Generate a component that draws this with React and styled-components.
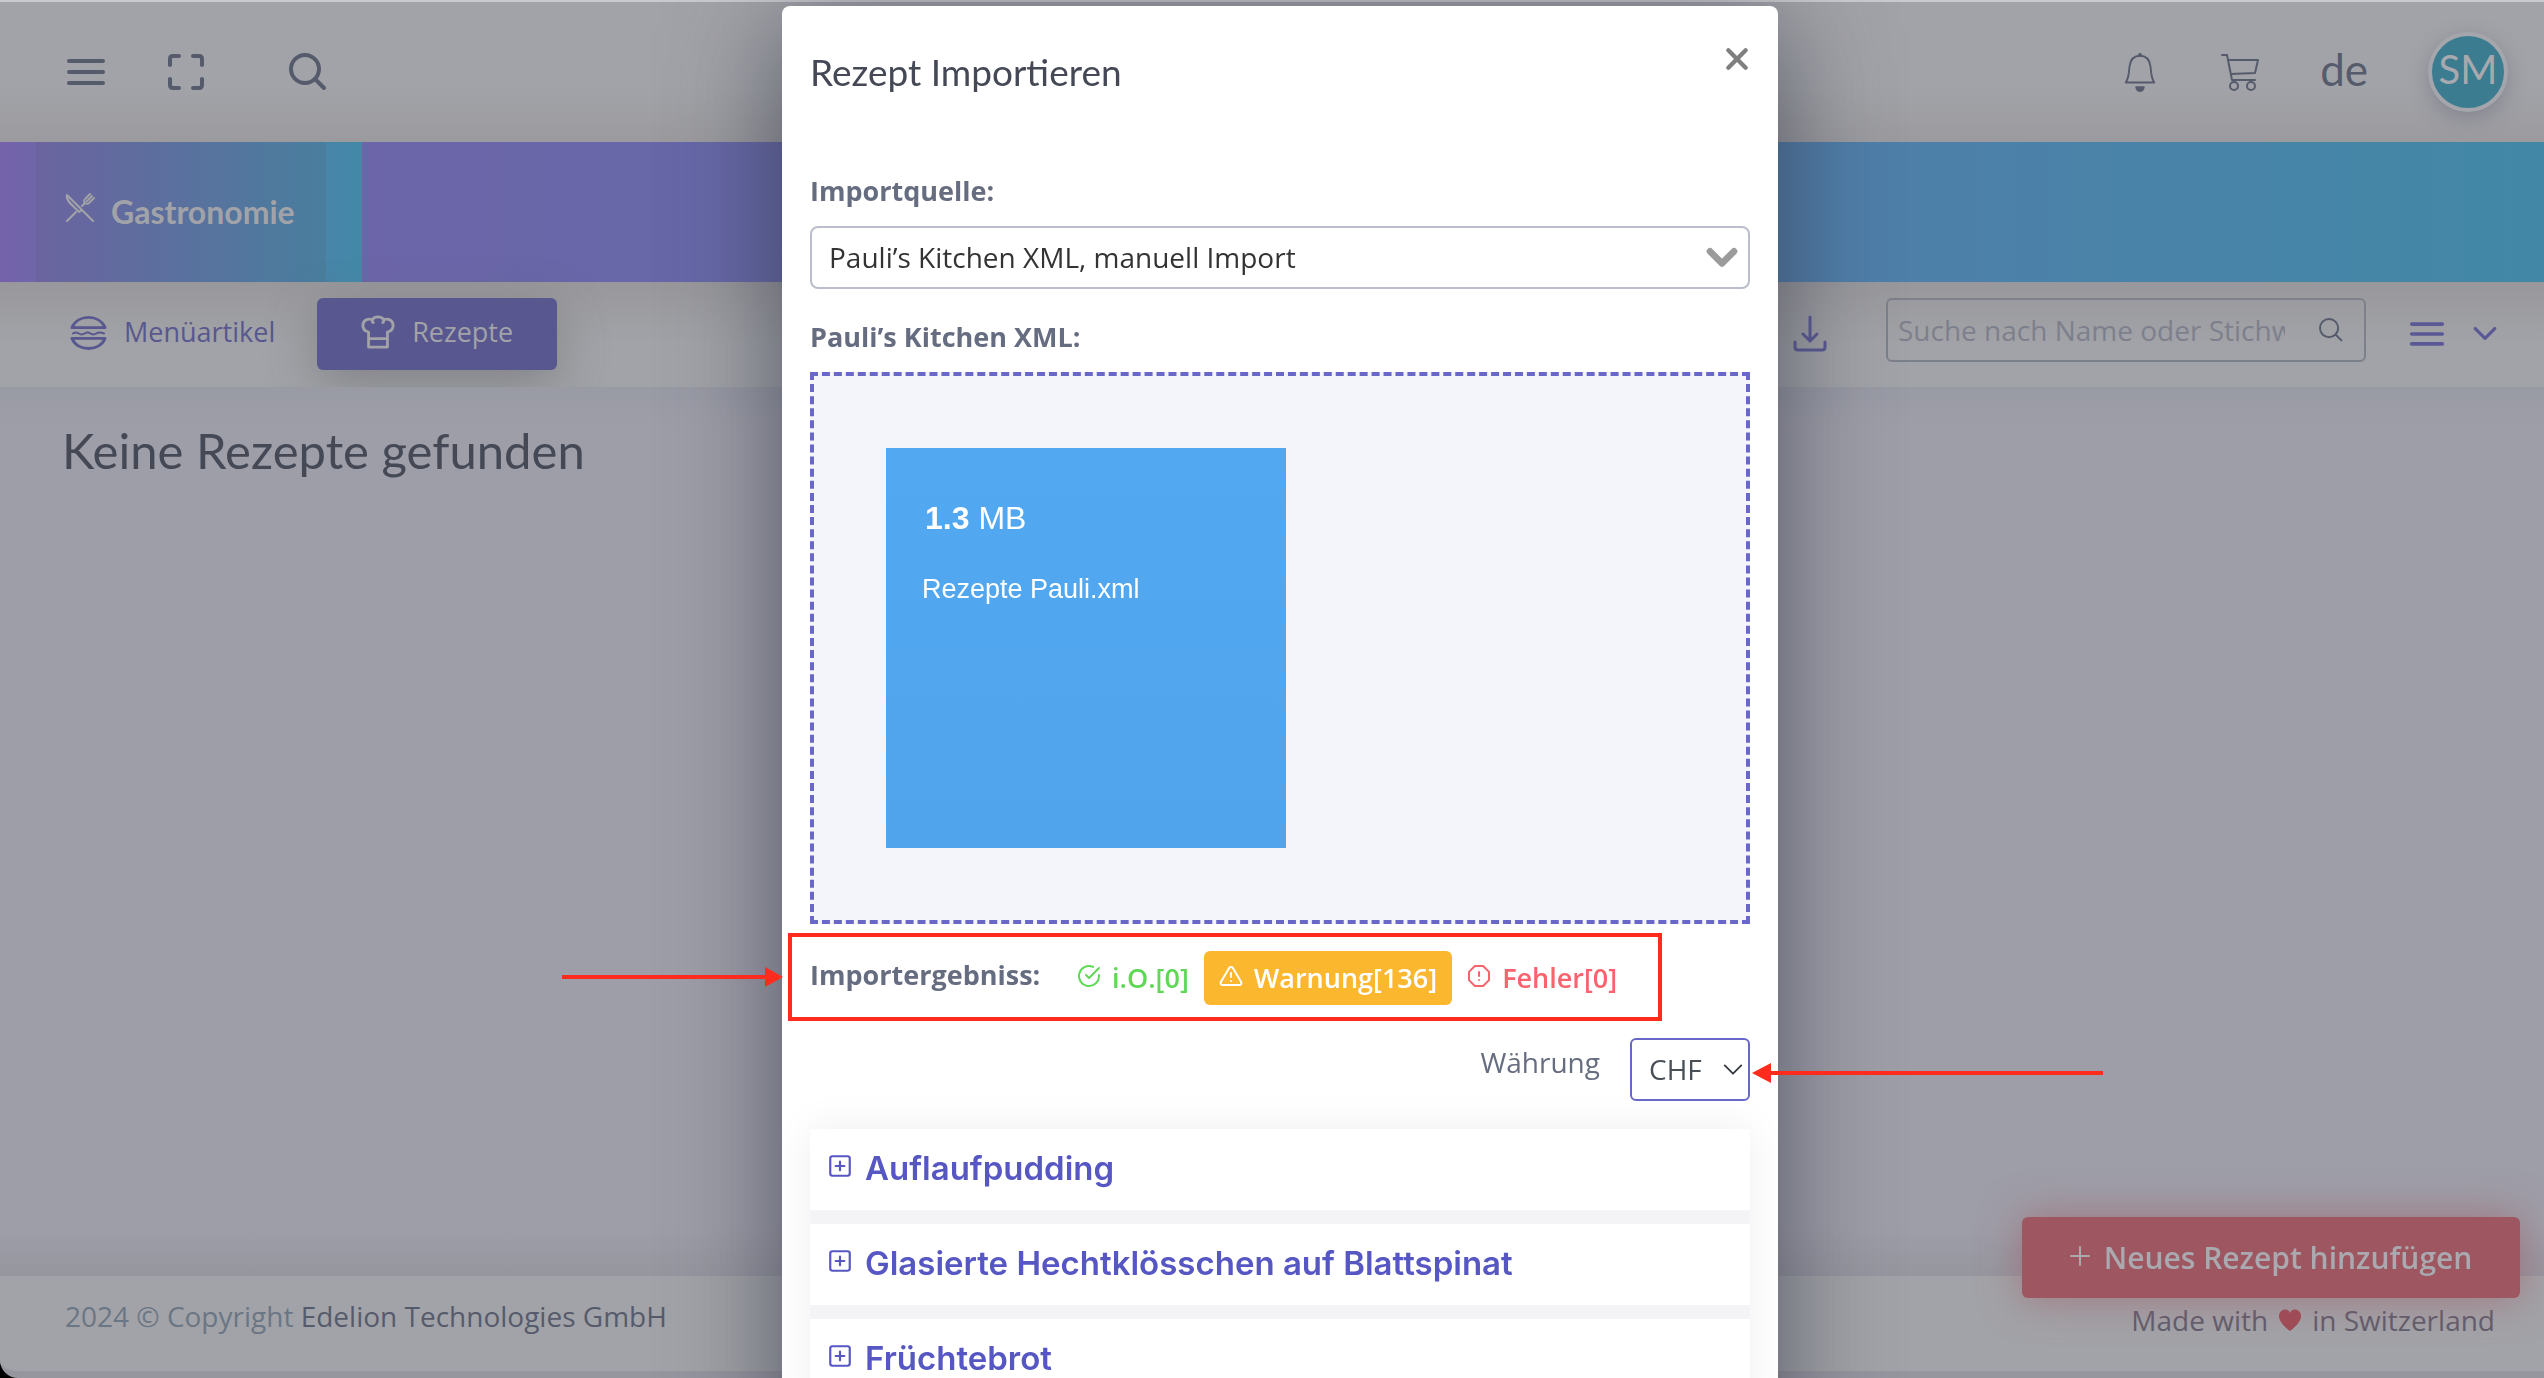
import React from 'react';
import styled, { createGlobalStyle, css } from 'styled-components';
import { FiCheckCircle, FiAlertTriangle, FiAlertOctagon, FiPlusSquare } from 'react-icons/fi';

const GlobalStyle = createGlobalStyle`
  *,
  *::before,
  *::after {
    box-sizing: border-box;
  }

  body {
    margin: 0;
    background: #000;
    color: #565b6c;
    font-family: 'Open Sans', 'Noto Sans', sans-serif;
    font-size: 28px;
    line-height: 40px;
  }

  button,
  input,
  select {
    font: inherit;
    color: inherit;
  }

  button {
    padding: 0;
    border: 0;
    background: none;
  }
`;

const headingFont = css`
  font-family: Lato, 'Open Sans', sans-serif;
`;

const Page = styled.div`
  display: flex;
  flex-direction: column;
  height: 100vh;
  overflow: hidden;
  border-top: 2px solid #c9cacd;
  border-bottom: 7px solid #96969f;
  border-bottom-left-radius: 18px;
  background: #9e9ea8;
`;

const Icon = styled.svg`
  flex: none;
  width: ${({ $size }) => $size}px;
  height: ${({ $size }) => $size}px;
  fill: none;
  stroke: currentColor;
  stroke-width: ${({ $stroke }) => $stroke || 2};
  stroke-linecap: round;
  stroke-linejoin: round;
`;

/* Header */

const HeaderBar = styled.header`
  display: flex;
  flex: none;
  align-items: center;
  justify-content: space-between;
  height: 140px;
  padding: 0 36px 0 66px;
  background: linear-gradient(#a2a3a8 60%, #9b9b9f);
`;

const HeaderLeft = styled.div`
  display: flex;
  align-items: center;
`;

const HeaderRight = styled.div`
  display: flex;
  align-items: center;
  gap: 60px;
`;

const IconButton = styled.button`
  display: flex;
  margin-right: ${({ $space }) => $space || 0}px;
`;

const Language = styled.button`
  ${headingFont}
  padding-bottom: 6px;
  font-size: 44px;
`;

const Avatar = styled.button`
  ${headingFont}
  width: 80px;
  height: 80px;
  padding-bottom: 6px;
  border: 4px solid #a5a6ac;
  border-radius: 50%;
  background: #3c7c90;
  box-shadow: 0 6px 20px rgba(80, 80, 110, 0.35);
  color: #a8a9ae;
  font-size: 40px;
`;

/* Category banner */

const Banner = styled.nav`
  display: flex;
  flex: none;
  height: 140px;
  background: linear-gradient(90deg, #7163aa, #6668a8 30%, #4d80a9 76%, #4288a6);
`;

const Category = styled.div`
  padding: 0 36px;
  background: linear-gradient(90deg, #7562aa, #4389a8);
`;

const CategoryLink = styled.a`
  ${headingFont}
  display: flex;
  align-items: center;
  gap: 16px;
  width: 290px;
  height: 140px;
  padding-left: 29px;
  background: rgba(80, 90, 100, 0.15);
  color: #a2a3a8;
  font-size: 32px;
  font-weight: 700;
  text-decoration: none;

  svg {
    margin-bottom: 8px;
  }
`;

/* Toolbar */

const Toolbar = styled.div`
  display: flex;
  flex: none;
  align-items: flex-start;
  justify-content: space-between;
  height: 105px;
  padding: 16px 46px 0 70px;
  background: linear-gradient(#98989c, #a2a3a8 60%);
`;

const Tabs = styled.div`
  display: flex;
  gap: 42px;
`;

const Tab = styled.button`
  display: flex;
  align-items: center;
  gap: 17px;
  height: 72px;
  padding-bottom: 4px;
  color: #58578f;
  font-size: 27px;

  ${({ $active }) =>
    $active &&
    css`
      padding: 0 44px 4px;
      border-radius: 6px;
      background: #58578f;
      box-shadow: 0 14px 50px rgba(90, 90, 90, 0.45);
      color: #a2a3a8;
    `}
`;

const Tools = styled.div`
  display: flex;
  align-items: center;
  height: 72px;
  color: #5a5996;
`;

const SearchBox = styled.label`
  display: flex;
  align-items: center;
  align-self: flex-start;
  width: 480px;
  height: 64px;
  margin: 0 43px 0 57px;
  padding: 0 20px 0 10px;
  border: 2px solid #7c808b;
  border-radius: 6px;
  color: #565b6c;
`;

const SearchInput = styled.input`
  width: 387px;
  margin-right: auto;
  padding: 0;
  border: 0;
  outline: 0;
  background: none;

  &::placeholder {
    color: #7d808c;
    opacity: 1;
  }
`;

/* Content and footer */

const Content = styled.main`
  flex: 1;
  padding: 37px 62px;
  background: linear-gradient(#989aa4, #9e9ea8 40px, #9e9ea8 840px, #96969f);
`;

const EmptyTitle = styled.h1`
  ${headingFont}
  margin: 0;
  color: #454955;
  font-size: 49px;
  font-weight: 400;
  line-height: 52px;
`;

const FooterBar = styled.footer`
  display: flex;
  flex: none;
  align-items: flex-start;
  justify-content: space-between;
  height: 95px;
  padding: 20px 49px 0 65px;
  background: #a2a3a8;
`;

const FooterText = styled.p`
  margin: 0;
  color: #6b7684;

  a {
    color: #565b6c;
    text-decoration: none;
  }
`;

const MadeWith = styled.p`
  display: flex;
  align-items: center;
  gap: 10px;
  margin: 4px 0 0;
  color: #615d6c;
`;

const AddButton = styled.button`
  position: fixed;
  right: 24px;
  bottom: 80px;
  display: flex;
  align-items: center;
  justify-content: center;
  gap: 14px;
  width: 498px;
  height: 81px;
  border-radius: 6px;
  background: #9e5661;
  box-shadow: 0 0 40px rgba(158, 86, 97, 0.6);
  color: #a9a9af;
  font-size: 30px;
  font-weight: 600;

  svg {
    margin-bottom: 4px;
  }
`;

/* Import dialog */

const Overlay = styled.div`
  position: fixed;
  inset: 0;
  display: flex;
  align-items: flex-start;
  justify-content: center;
  overflow: hidden;
  padding: 6px 0 0 16px;
`;

const Dialog = styled.section`
  width: 996px;
  padding: 33px 28px 60px;
  border-radius: 8px;
  background: #fff;
  box-shadow: 0 20px 110px rgba(50, 54, 70, 0.7);
  color: #676d80;
`;

const DialogHead = styled.div`
  display: flex;
  align-items: flex-start;
  justify-content: space-between;
  margin-bottom: 79px;
`;

const DialogTitle = styled.h2`
  ${headingFont}
  margin: 13px 0 0;
  color: #454955;
  font-size: 37px;
  font-weight: 400;
  line-height: 40px;
`;

const CloseButton = styled.button`
  display: flex;
  align-items: center;
  height: 40px;
  color: #7f7f7f;
`;

const FieldTitle = styled.div`
  margin-bottom: 15px;
  font-size: 27px;
  font-weight: 700;
`;

const SelectWrap = styled.div`
  position: relative;
  margin-bottom: ${({ $space }) => $space || 0}px;

  svg {
    position: absolute;
    top: 50%;
    right: ${({ $right }) => $right}px;
    transform: translateY(-50%);
    pointer-events: none;
  }
`;

const Select = styled.select`
  width: 100%;
  height: 63px;
  padding: 0 17px 2px;
  border: 2px solid #b9bec9;
  border-radius: 8px;
  outline: 0;
  appearance: none;
  background: #fff;
  color: #333;
`;

const CurrencySelect = styled(Select)`
  width: 120px;
  border-color: #6968c8;
  border-radius: 6px;
  color: #495057;
`;

const DropZone = styled.div`
  padding: 72px;
  border: 4px dashed #6968c8;
  background: #f3f5fa;
`;

const FilePreview = styled.div`
  width: 400px;
  height: 400px;
  padding: 50px 36px;
  background: linear-gradient(#53a9f1, #4fa4ec);
  color: #fff;
  font-family: 'Liberation Sans', Arial, sans-serif;
  font-size: 27px;
`;

const FileSize = styled.p`
  margin: 0 0 31px;
  padding-left: 3px;
  font-size: 32px;
`;

const FileName = styled.p`
  margin: 0;
`;

const ResultRow = styled.div`
  display: flex;
  align-items: center;
  margin: 27px 0 33px;
`;

const ResultTitle = styled.span`
  width: 252px;
  padding-bottom: 6px;
  font-size: 27px;
  font-weight: 700;
`;

const resultColors = {
  ok: '#5fd856',
  warning: '#fbb72e',
  error: '#f9636e',
};

const ResultButton = styled.button`
  display: flex;
  align-items: center;
  gap: 11px;
  height: 54px;
  padding: 0 15px;
  border-radius: 6px;
  background: ${({ $kind, $active }) => ($active ? resultColors[$kind] : 'none')};
  color: ${({ $kind, $active }) => ($active ? '#fff' : resultColors[$kind])};
  font-size: 27px;
  font-weight: 600;

  svg {
    width: 24px;
    height: 24px;
    margin-bottom: 4px;
    stroke-width: 2;
  }
`;

const CurrencyRow = styled.div`
  display: flex;
  align-items: flex-start;
  justify-content: flex-end;
  gap: 30px;
  margin-bottom: 28px;
`;

const CurrencyLabel = styled.label`
  line-height: 48px;
`;

const RecipeList = styled.div`
  display: grid;
  gap: 14px;
  background: #f4f4f6;
  box-shadow: 0 0 40px rgba(8, 10, 30, 0.07);
`;

const RecipeCard = styled.button`
  display: flex;
  align-items: center;
  gap: 12px;
  height: 81px;
  padding: 0 17px 4px;
  background: #fff;
  color: #5757c4;
  font-family: Inter, 'Open Sans', sans-serif;
  font-size: 33px;
  font-weight: 600;
  text-align: left;

  svg {
    width: 26px;
    height: 26px;
    margin-bottom: 3px;
    stroke-width: 2;
  }
`;

/* Markers over the dialog */

const MarkerBox = styled.div`
  position: fixed;
  top: 933px;
  left: 788px;
  width: 874px;
  height: 88px;
  border: 4px solid #ff2b1d;
`;

const MarkerArrow = styled.svg`
  position: fixed;
  top: ${({ $top }) => $top}px;
  left: ${({ $left }) => $left}px;
  fill: #ff2b1d;
`;

const MenuIcon = ({ size, stroke }) => (
  <Icon viewBox="0 0 40 40" $size={size} $stroke={stroke}>
    <path d="M3 9h34M3 20h34M3 31h34" />
  </Icon>
);

const SearchIcon = ({ size, stroke }) => (
  <Icon viewBox="0 0 40 40" $size={size} $stroke={stroke}>
    <circle cx="17" cy="17" r="14" />
    <path d="M27 27l9 9" />
  </Icon>
);

const ScanIcon = () => (
  <Icon viewBox="0 0 40 40" $size={40} $stroke={4}>
    <path d="M4 13V7q0-3 3-3h6M27 4h6q3 0 3 3v6M36 27v6q0 3-3 3h-6M13 36H7q-3 0-3-3v-6" />
  </Icon>
);

const BellIcon = () => (
  <Icon viewBox="0 0 40 42" $size={40} $stroke={2}>
    <path d="M5 32h30c-4-6-3-11-4-17C30 8 26 4 20 4S10 8 9 15c-1 6 0 11-4 17z" />
    <circle cx="20" cy="3" r="2" fill="currentColor" stroke="none" />
    <path d="M16 37h8q-1 4-4 4t-4-4z" fill="currentColor" />
  </Icon>
);

const CartIcon = () => (
  <Icon viewBox="0 0 40 40" $size={40} $stroke={2}>
    <path d="M2 3h5l5 25h23M9 8h29l-3 13-24 1" />
    <circle cx="14" cy="34" r="4" />
    <circle cx="31" cy="34" r="4" />
  </Icon>
);

const CutleryIcon = () => (
  <Icon viewBox="0 0 30 30" $size={30} $stroke={2}>
    <path d="M2 28l9-9M2 2c-2 6 8 12 12 17l3-2L2 2zM15 15l13 13M17 13l3-3M20 10q-2-3 1-5l4-4M20 10q3 2 5-1l4-4M22 8l5-5" />
  </Icon>
);

const BurgerIcon = () => (
  <Icon viewBox="0 0 38 38" $size={37} $stroke={3}>
    <path d="M2 14h34C30 0 8 0 2 14zM2 25h34C30 39 8 39 2 25z" />
    <path d="M3 20q3-2 6 0t6 0 6 0 6 0 8 0" strokeWidth="2" />
  </Icon>
);

const ChefHatIcon = () => (
  <Icon viewBox="0 0 36 36" $size={34} $stroke={3}>
    <path d="M8 34h20V18c4-1 6-4 6-7 0-5-5-8-10-6-2-4-10-4-12 0-5-2-10 1-10 6 0 3 2 6 6 7v16zM8 25h20M12 5q0 3 1 3M24 5q0 3-1 3" />
  </Icon>
);

const DownloadIcon = () => (
  <Icon viewBox="0 0 38 38" $size={38} $stroke={3}>
    <path d="M19 2v24M12 19l7 7 7-7M4 27v5q0 3 3 3h24q3 0 3-3v-5" />
  </Icon>
);

const PlusIcon = () => (
  <Icon viewBox="0 0 20 20" $size={20} $stroke={2}>
    <path d="M10 1v18M1 10h18" />
  </Icon>
);

const CloseIcon = () => (
  <Icon viewBox="0 0 24 24" $size={26} $stroke={4}>
    <path d="M4 4l16 16M20 4L4 20" />
  </Icon>
);

const ChevronIcon = ({ size, stroke, color }) => (
  <Icon viewBox="0 0 24 24" $size={size} $stroke={stroke} color={color}>
    <path d="M3 7l9 9 9-9" />
  </Icon>
);

const HeartIcon = () => (
  <svg width="24" height="22" viewBox="0 0 24 22" fill="#a04b58">
    <path d="M12 22C7 18 1 13 1 7c0-7 9-9 11-3 2-6 11-4 11 3 0 6-6 11-11 15z" />
  </svg>
);

const recipes = ['Auflaufpudding', 'Glasierte Hechtklösschen auf Blattspinat', 'Früchtebrot'];

const results = [
  { kind: 'ok', text: 'i.O.[0]', icon: FiCheckCircle },
  { kind: 'warning', text: 'Warnung[136]', icon: FiAlertTriangle, active: true },
  { kind: 'error', text: 'Fehler[0]', icon: FiAlertOctagon },
];

const Header = () => (
  <HeaderBar>
    <HeaderLeft>
      <IconButton aria-label="Menü" $space={60}>
        <MenuIcon size={40} stroke={4} />
      </IconButton>
      <IconButton aria-label="Vollbild" $space={82}>
        <ScanIcon />
      </IconButton>
      <IconButton aria-label="Suche">
        <SearchIcon size={40} stroke={4} />
      </IconButton>
    </HeaderLeft>
    <HeaderRight>
      <IconButton aria-label="Mitteilungen">
        <BellIcon />
      </IconButton>
      <IconButton aria-label="Warenkorb">
        <CartIcon />
      </IconButton>
      <Language>de</Language>
      <Avatar>SM</Avatar>
    </HeaderRight>
  </HeaderBar>
);

const ImportDialog = () => (
  <Overlay>
    <Dialog role="dialog" aria-labelledby="import-title">
      <DialogHead>
        <DialogTitle id="import-title">Rezept Importieren</DialogTitle>
        <CloseButton aria-label="Schliessen">
          <CloseIcon />
        </CloseButton>
      </DialogHead>

      <FieldTitle>
        <label htmlFor="source">Importquelle:</label>
      </FieldTitle>
      <SelectWrap $space={28} $right={12}>
        <Select id="source">
          <option>Pauli’s Kitchen XML, manuell Import</option>
        </Select>
        <ChevronIcon size={32} stroke={5} color="#9b9b9b" />
      </SelectWrap>

      <FieldTitle>Pauli’s Kitchen XML:</FieldTitle>
      <DropZone>
        <FilePreview>
          <FileSize>
            <strong>1.3</strong> MB
          </FileSize>
          <FileName>Rezepte Pauli.xml</FileName>
        </FilePreview>
      </DropZone>

      <ResultRow>
        <ResultTitle>Importergebniss:</ResultTitle>
        {results.map(({ kind, text, icon: ResultIcon, active }) => (
          <ResultButton key={kind} $kind={kind} $active={active}>
            <ResultIcon />
            {text}
          </ResultButton>
        ))}
      </ResultRow>

      <CurrencyRow>
        <CurrencyLabel htmlFor="currency">Währung</CurrencyLabel>
        <SelectWrap $right={6}>
          <CurrencySelect id="currency">
            <option>CHF</option>
          </CurrencySelect>
          <ChevronIcon size={22} stroke={2} color="#343a40" />
        </SelectWrap>
      </CurrencyRow>

      <RecipeList>
        {recipes.map((recipe) => (
          <RecipeCard key={recipe}>
            <FiPlusSquare />
            {recipe}
          </RecipeCard>
        ))}
      </RecipeList>
    </Dialog>
  </Overlay>
);

const App = () => {
  return (
    <>
      <GlobalStyle />
      <Page>
        <Header />
        <Banner>
          <Category>
            <CategoryLink href="#gastronomie">
              <CutleryIcon />
              Gastronomie
            </CategoryLink>
          </Category>
        </Banner>
        <Toolbar>
          <Tabs>
            <Tab>
              <BurgerIcon />
              Menüartikel
            </Tab>
            <Tab $active>
              <ChefHatIcon />
              Rezepte
            </Tab>
          </Tabs>
          <Tools>
            <IconButton aria-label="Importieren">
              <DownloadIcon />
            </IconButton>
            <SearchBox>
              <SearchInput aria-label="Suche" placeholder="Suche nach Name oder Stichwort" />
              <SearchIcon size={26} stroke={3} />
            </SearchBox>
            <IconButton aria-label="Ansicht" $space={27}>
              <MenuIcon size={36} stroke={4} />
            </IconButton>
            <IconButton aria-label="Mehr">
              <ChevronIcon size={26} stroke={3} />
            </IconButton>
          </Tools>
        </Toolbar>
        <Content>
          <EmptyTitle>Keine Rezepte gefunden</EmptyTitle>
        </Content>
        <FooterBar>
          <FooterText>
            2024 © Copyright <a href="#edelion">Edelion Technologies GmbH</a>
          </FooterText>
          <MadeWith>
            Made with <HeartIcon /> in Switzerland
          </MadeWith>
        </FooterBar>
      </Page>
      <AddButton>
        <PlusIcon />
        Neues Rezept hinzufügen
      </AddButton>
      <ImportDialog />
      <MarkerBox />
      <MarkerArrow $top={967} $left={562} width="221" height="20" viewBox="0 0 221 20">
        <path d="M0 8h203V0l18 10-18 10v-8H0z" />
      </MarkerArrow>
      <MarkerArrow $top={1063} $left={1752} width="351" height="20" viewBox="0 0 351 20">
        <path d="M351 8H19V0L0 10l19 10v-8h332z" />
      </MarkerArrow>
    </>
  );
};

export default App;
